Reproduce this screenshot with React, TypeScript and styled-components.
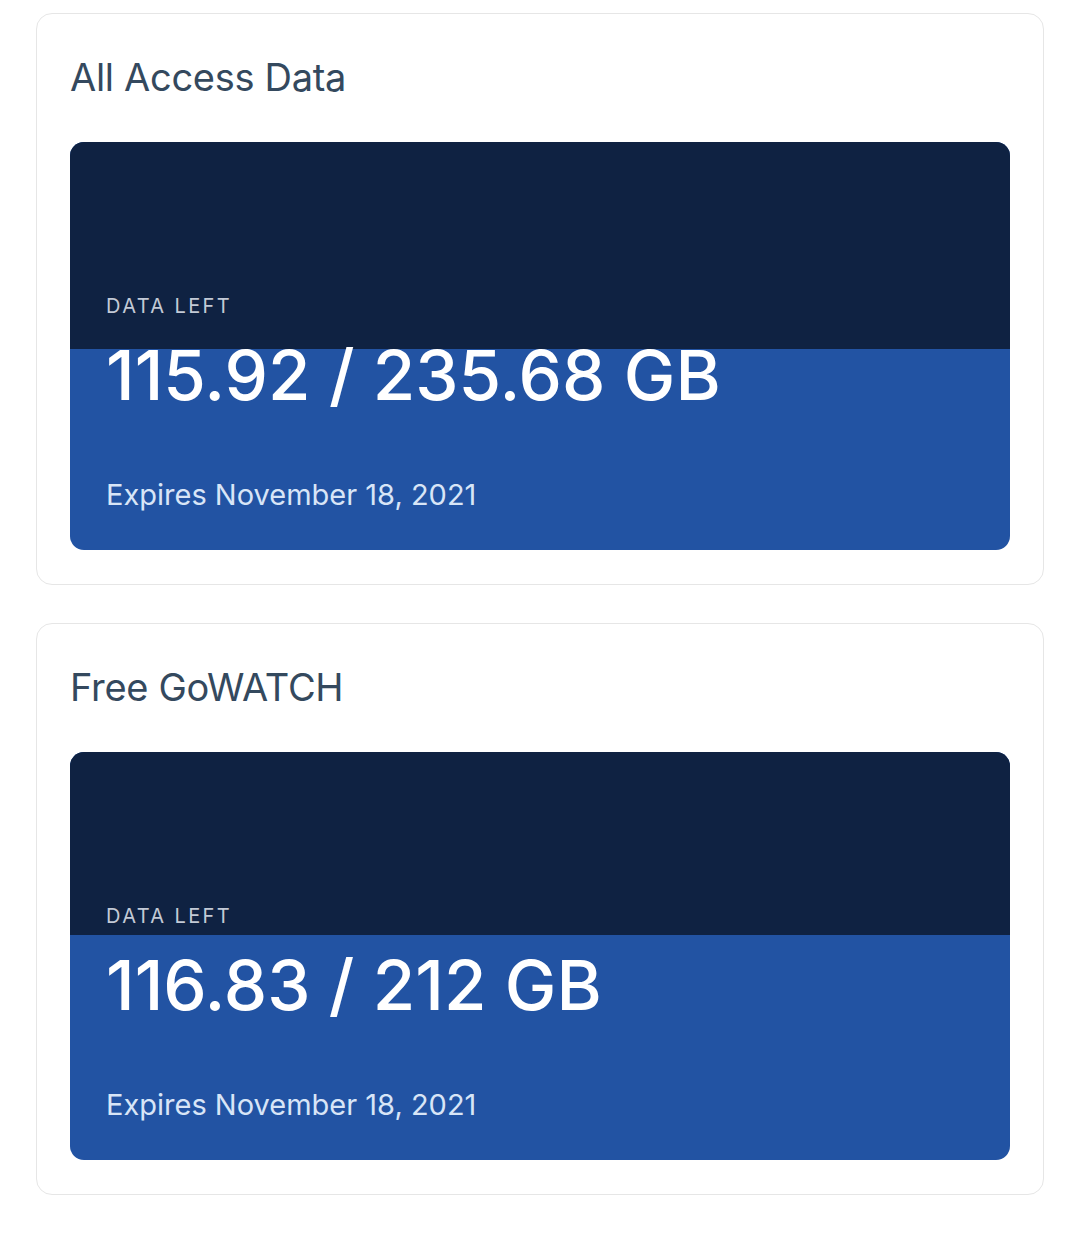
import React from "react";
import styled, { createGlobalStyle } from "styled-components";

interface IPlan {
  title: string;
  left: number;
  total: number;
  expires: string;
}

const plans: IPlan[] = [
  { title: "All Access Data", left: 115.92, total: 235.68, expires: "November 18, 2021" },
  { title: "Free GoWATCH", left: 116.83, total: 212, expires: "November 18, 2021" },
];

const GlobalStyle = createGlobalStyle`
  body {
    margin: 0;
    background: #ffffff;
    font-family: Inter, "Noto Sans", "Liberation Sans", sans-serif;
  }
`;

const Page = styled.div`
  display: flex;
  flex-direction: column;
  gap: 38px;
  padding: 13px 36px;
`;

const Card = styled.div`
  border: 1px solid #e6e6e6;
  border-radius: 16px;
  padding: 39px 33px 34px;
  background: #fff;
`;

const Title = styled.h2`
  margin: 0 0 41px;
  font-size: 38px;
  line-height: 48px;
  font-weight: 400;
  letter-spacing: -0.3px;
  color: #34495e;
`;

const Meter = styled.div`
  position: relative;
  overflow: hidden;
  border-radius: 14px;
  background: #2253a3;
  padding: 152px 36px 38px;
`;

const UsedFill = styled.div`
  position: absolute;
  top: 0;
  left: 0;
  right: 0;
  background: #0f2242;
`;

const Content = styled.div`
  position: relative;
  display: flex;
  flex-direction: column;
`;

const Label = styled.div`
  font-size: 20px;
  line-height: 24px;
  letter-spacing: 2.4px;
  color: #c3cad6;
  margin-bottom: 17px;
`;

const Amount = styled.div`
  font-size: 69px;
  line-height: 80px;
  font-weight: 500;
  color: #ffffff;
  margin-bottom: 63px;
`;

const Expires = styled.div`
  font-size: 29px;
  line-height: 34px;
  color: #d8e5f7;
`;

const PlanCard = ({ plan }: { plan: IPlan }) => {
  const used = ((plan.total - plan.left) / plan.total) * 100;
  return (
    <Card>
      <Title>{plan.title}</Title>
      <Meter>
        <UsedFill style={{ height: `${used}%` }} />
        <Content>
          <Label>DATA LEFT</Label>
          <Amount>
            {plan.left} / {plan.total} GB
          </Amount>
          <Expires>Expires {plan.expires}</Expires>
        </Content>
      </Meter>
    </Card>
  );
};

const App = () => {
  return (
    <>
      <GlobalStyle />
      <Page>
        {plans.map(p => (
          <PlanCard key={p.title} plan={p} />
        ))}
      </Page>
    </>
  );
};

export default App;
